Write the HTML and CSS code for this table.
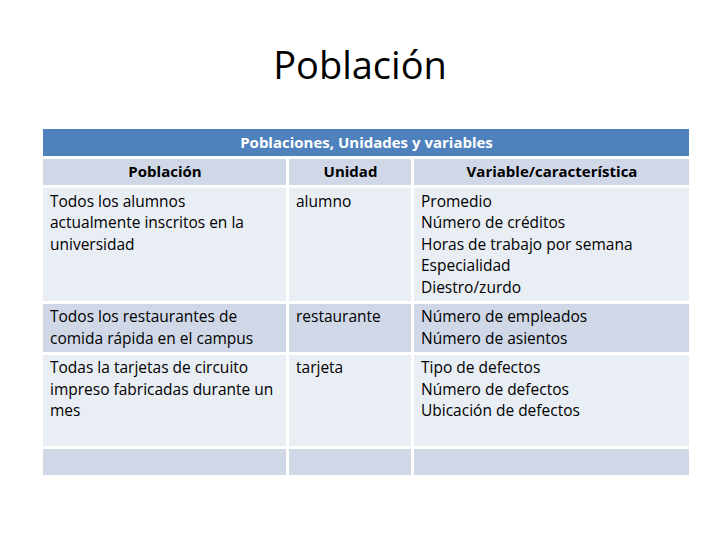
FILE: index.html
```html
<!DOCTYPE html>
<html lang="es">
<head>
<meta charset="utf-8">
<link rel="stylesheet" href="styles.css">
</head>
<body>
<div class="slide">
  <h1 class="title">Población</h1>
  <div class="table">
    <div class="cell caption">Poblaciones, Unidades y variables</div>
    <div class="cell head dark">Población</div>
    <div class="cell head dark">Unidad</div>
    <div class="cell head dark">Variable/característica</div>

    <div class="cell light">Todos los alumnos<br>actualmente inscritos en la<br>universidad</div>
    <div class="cell light">alumno</div>
    <div class="cell light">Promedio<br>Número de créditos<br>Horas de trabajo por semana<br>Especialidad<br>Diestro/zurdo</div>

    <div class="cell dark">Todos los restaurantes de<br>comida rápida en el campus</div>
    <div class="cell dark">restaurante</div>
    <div class="cell dark">Número de empleados<br>Número de asientos</div>

    <div class="cell light tall">Todas la tarjetas de circuito<br>impreso fabricadas durante un<br>mes</div>
    <div class="cell light tall">tarjeta</div>
    <div class="cell light tall">Tipo de defectos<br>Número de defectos<br>Ubicación de defectos</div>

    <div class="cell dark empty"></div>
    <div class="cell dark empty"></div>
    <div class="cell dark empty"></div>
  </div>
</div>
</body>
</html>
```

FILE: styles.css
```css
html, body {
  margin: 0;
  padding: 0;
  background: #ffffff;
}

.slide {
  width: 720px;
  height: 540px;
  position: relative;
  font-family: "Open Sans", "Liberation Sans", sans-serif;
  color: #000000;
  padding-top: 42px;
  box-sizing: border-box;
}

.title {
  margin: 0 0 43px 0;
  font-size: 38px;
  line-height: 44px;
  font-weight: 400;
  text-align: center;
}

.table {
  margin-left: 43px;
  width: 646px;
  display: grid;
  grid-template-columns: 243px 122px 275px;
  gap: 3px;
  background: #ffffff;
  font-size: 15.5px;
  line-height: 21.5px;
}

.cell {
  padding: 2.5px 6px 2.5px 7px;
}

.caption {
  grid-column: 1 / 4;
  background: #4f81bd;
  color: #ffffff;
  font-size: 15px;
  font-weight: 700;
  text-align: center;
  padding-top: 3px;
  padding-bottom: 2px;
}

.head {
  font-size: 15px;
  font-weight: 700;
  text-align: center;
}

.dark {
  background: #d0d8e8;
}

.light {
  background: #e9edf4;
}

.tall {
  min-height: 86px;
}

.empty {
  min-height: 21.5px;
}
```
